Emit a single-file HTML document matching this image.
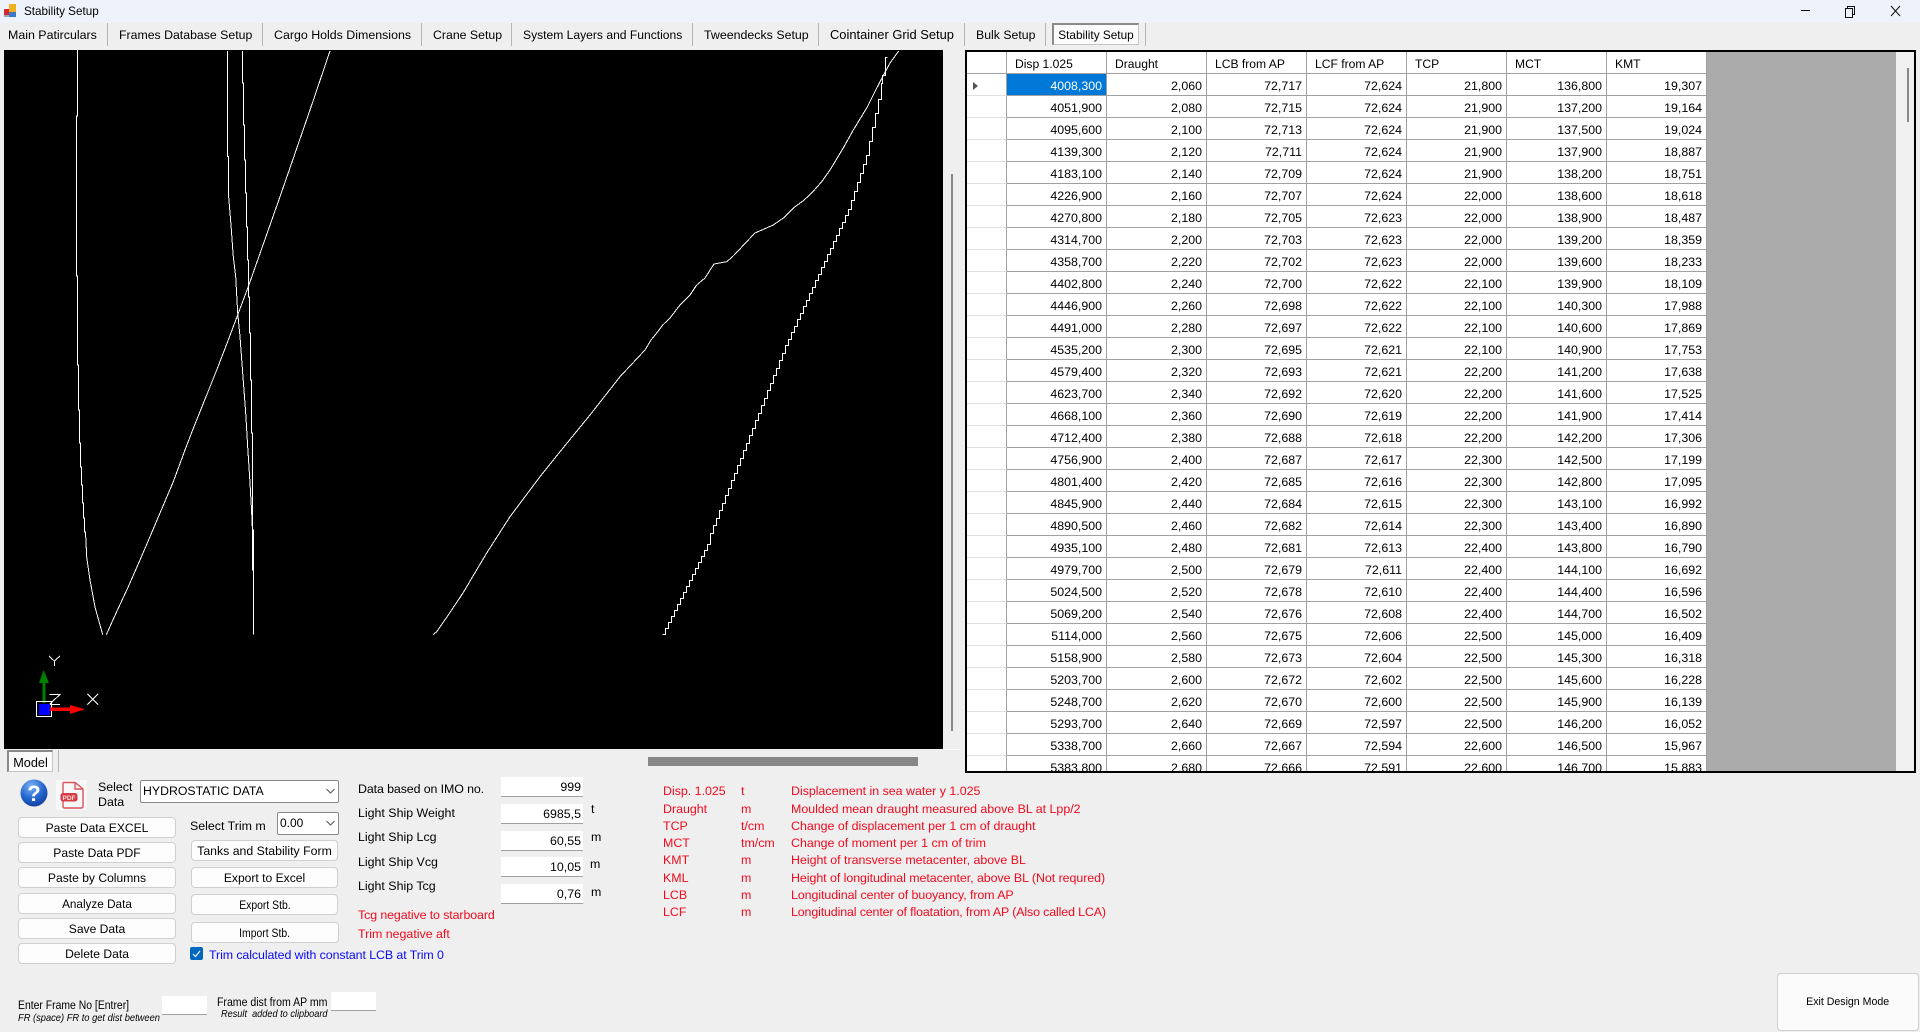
<!DOCTYPE html>
<html><head><meta charset="utf-8"><title>Stability Setup</title>
<style>
html,body{margin:0;padding:0}
body{width:1920px;height:1032px;position:relative;overflow:hidden;background:#efefef;font:12.4px/16px "Liberation Sans",sans-serif;color:#000}
.t{position:absolute;white-space:nowrap;height:16px;line-height:16px}
.x{transform-origin:0 50%}
.r{color:#f00a1e}
.sep{position:absolute;width:1px;background:#b4b4b4}
.btn{position:absolute;box-sizing:border-box;background:#fdfdfd;border:1px solid #d0d0d0;border-radius:4px;text-align:center;white-space:nowrap;height:21px;line-height:20px;font-size:12.1px}
.btn span{display:inline-block}
.inp{position:absolute;box-sizing:border-box;left:501px;width:82px;height:20px;background:#fff;border-bottom:1px solid #a0a0a0;text-align:right;padding-right:2px;line-height:21px}
.cmb{position:absolute;box-sizing:border-box;background:#fff;border:1px solid #888;border-radius:2px;height:23px;line-height:21px;padding-left:2px;white-space:nowrap}
table{border-collapse:separate;border-spacing:0;table-layout:fixed;position:absolute;left:0;top:0;width:740px;background:#fff}
td,th{box-sizing:border-box;height:22px;padding:3px 4px 0 0;border-right:1px solid #a0a0a0;border-bottom:1px solid #a0a0a0;text-align:right;vertical-align:top;font:12.4px/18px "Liberation Sans",sans-serif;overflow:hidden;white-space:nowrap}
th{text-align:left;padding:3px 0 0 8px;font-size:12.1px;font-weight:400}
td:first-child,th:first-child{border-bottom-color:#e2e2e2;padding:0}
th:first-child{border-bottom-color:#a0a0a0}
td.s{background:#0078d7;color:#fff}
</style></head><body>
<div style="position:absolute;left:0;top:0;width:1920px;height:23px;background:#eef3fb"></div>
<svg style="position:absolute;left:3px;top:4px" width="15" height="14" viewBox="0 0 15 14" shape-rendering="crispEdges"><rect x="6" y="0" width="7" height="8" fill="#f0b020"/><rect x="1" y="5" width="5" height="6" fill="#d8262c"/><rect x="6" y="8" width="7" height="5" fill="#3b78c8"/><rect x="1" y="11" width="5" height="2" fill="#9aa6b8"/></svg>
<span class="t" style="left:24px;top:4px;font-size:11.7px">Stability Setup</span>
<svg style="position:absolute;left:1795px;top:2px" width="115" height="20" fill="none" stroke="#111" stroke-width="1"><path d="M6 8.5h9" /><path d="M50.5 6.5h7v9h-7z M52.500 6.500v-2h7v8h-2"/><path d="M96 4l9 10M105 4l-9 10" /></svg>

<span class="t" style="left:8px;top:27px">Main Patirculars</span><div class="sep" style="left:107px;top:23px;height:23px"></div>
<span class="t" style="left:119px;top:27px;font-size:12.3px">Frames Database Setup</span><div class="sep" style="left:262px;top:23px;height:23px"></div>
<span class="t" style="left:274px;top:27px">Cargo Holds Dimensions</span><div class="sep" style="left:421px;top:23px;height:23px"></div>
<span class="t" style="left:433px;top:27px;font-size:12.3px">Crane Setup</span><div class="sep" style="left:511px;top:23px;height:23px"></div>
<span class="t" style="left:523px;top:27px;font-size:12.1px">System Layers and Functions</span><div class="sep" style="left:692px;top:23px;height:23px"></div>
<span class="t" style="left:704px;top:27px">Tweendecks Setup</span><div class="sep" style="left:818px;top:23px;height:23px"></div>
<span class="t" style="left:830px;top:27px;font-size:12.9px">Cointainer Grid Setup</span><div class="sep" style="left:964px;top:23px;height:23px"></div>
<span class="t" style="left:976px;top:27px;font-size:12.3px">Bulk Setup</span><div class="sep" style="left:1045px;top:23px;height:23px"></div>
<div style="position:absolute;box-sizing:border-box;left:1052px;top:23px;width:87px;height:22px;background:#fbfbfb;border:1px solid #c4c4c4;border-top:2px solid #8a8a8a;border-left:2px solid #8a8a8a;text-align:center;line-height:21px;white-space:nowrap;font-size:11.8px">Stability Setup</div>
<div class="sep" style="left:1145px;top:23px;height:23px"></div>

<svg style="position:absolute;left:4px;top:50px" width="939" height="699" viewBox="4 50 939 699">
<rect x="4" y="50" width="939" height="699" fill="#000"/>
<g fill="none" stroke="#fff" stroke-width="1" shape-rendering="crispEdges">
<path d="M77.500 50V116H76.500V276H77.500V365H78.500V410H79.500V443H80.500V467H81.500V485H82.500V503H83.500V518H84.500V532H85.500L86.700 557L90 580L95 607L102.700 634.700"/>
<path d="M106.300 634.700L116.700 611.700L128.300 586.700L140 560L150 536.700L160 513L173.300 481.700L185 450L193.300 428.300L206.700 395L216.700 370L228.300 340L248.300 286.700L280 196.700L310 110L330 51"/>
<path d="M227.500 51V156.500H228.500V195L231 225L233.300 256.700L235.700 276.700L237.700 313L240 336.700L242.700 373L245.700 413L247.700 447L250 483L251.700 513L252.500 532V570H253.500V634.700"/>
<path d="M242.500 51V83H243.500V125H244.500V160H245.500V193H246.500V227H247.500V260H248.500V297H249.500V333H250.500V380H251.500V433H252.500V530H253.500V634.700"/>
<path d="M898.700 51L890 63L880 81.700L866.700 108L853.300 130L843.300 148L830 170L821.700 181.700L811.700 193L803.300 200.700L793.300 208L783.300 218L773.300 225L755 233L746.700 241.700L733.300 256L726.700 261.700L714 264L705 278L696.700 285L690 295L680 305L670 318L662.700 325L656.700 333L651 340L645 350L620 376.700L590 415L560 451.700L540 476.700L510 516.700L486.700 553L463 593L448.300 615L436.700 631.700L433.300 634.700"/>
<path d="M662.500 634.500h3v-6h3v-6h3v-6h3v-6h3v-6h3v-6h3v-6h3v-6h3v-6h3v-6h3v-6h3v-6h3v-6h3v-6h3v-6h3v-4v-7h3v-8h3v-7h3v-8h3v-7h3v-8h3v-7h3v-8h3v-7h3v-8h3v-7h3v-8h3v-7h3v-8h3v-7h3v-8h3v-7h3v-8h3v-7h3v-8h3v-7h3v-8h3v-7h3v-8h3v-7h3v-8h3v-6h3v-7h3v-6h3v-7h3v-6h3v-7h3v-6h3v-7h3v-6h3v-7h3v-6h3v-7h3v-6h3v-7h3v-6h3v-7h3v-6h3v-7h3v-6h3v-7h3v-6h3v-9h3v-9h3v-9h3v-9h3v-9h3v-9h3v-14h3v-14h3v-14h3v-14h3v-16h1v-8h3v-18h2"/>
<path d="M49 656L54.300 661L60 656M54.300 661V666"/>
<path d="M49.300 694.500H60L49.300 704.500H60"/>
<path d="M87.300 694L98 704.700M98 694L87.300 704.700"/>
</g>
<rect x="42.500" y="682" width="3" height="21" fill="#008000"/>
<path d="M43.700 670L49 683H39Z" fill="#008000"/>
<rect x="36.500" y="701.500" width="15" height="15" fill="none" stroke="#fff" stroke-width="1"/>
<rect x="39" y="704" width="11" height="11" fill="#00f"/>
<rect x="50" y="707.500" width="20" height="3.500" fill="#f00"/>
<path d="M70 705L85 709.300L70 714Z" fill="#f00"/>
</svg>
<div style="position:absolute;left:943px;top:749px;width:17px;height:1px;background:#fff"></div>
<div style="position:absolute;left:951px;top:174px;width:2px;height:557px;background:#888"></div>
<div style="position:absolute;left:648px;top:757px;width:270px;height:9px;background:#878787"></div>

<div style="position:absolute;box-sizing:border-box;left:965px;top:50px;width:951px;height:723px;border:2px solid #000;background:#ababab;overflow:hidden">
<div style="position:absolute;right:0;top:0;width:18px;height:100%;background:#f0f0f0"></div>
<div style="position:absolute;left:940px;top:16px;width:2px;height:54px;background:#888"></div>
<table><colgroup><col style="width:40px"><col style="width:100px"><col style="width:100px"><col style="width:100px"><col style="width:100px"><col style="width:100px"><col style="width:100px"><col style="width:100px"></colgroup>
<tr><th></th><th>Disp 1.025</th><th>Draught</th><th>LCB from AP</th><th>LCF from AP</th><th>TCP</th><th>MCT</th><th>KMT</th></tr>
<tr><td></td><td class="s">4008,300</td><td>2,060</td><td>72,717</td><td>72,624</td><td>21,800</td><td>136,800</td><td>19,307</td></tr>
<tr><td></td><td>4051,900</td><td>2,080</td><td>72,715</td><td>72,624</td><td>21,900</td><td>137,200</td><td>19,164</td></tr>
<tr><td></td><td>4095,600</td><td>2,100</td><td>72,713</td><td>72,624</td><td>21,900</td><td>137,500</td><td>19,024</td></tr>
<tr><td></td><td>4139,300</td><td>2,120</td><td>72,711</td><td>72,624</td><td>21,900</td><td>137,900</td><td>18,887</td></tr>
<tr><td></td><td>4183,100</td><td>2,140</td><td>72,709</td><td>72,624</td><td>21,900</td><td>138,200</td><td>18,751</td></tr>
<tr><td></td><td>4226,900</td><td>2,160</td><td>72,707</td><td>72,624</td><td>22,000</td><td>138,600</td><td>18,618</td></tr>
<tr><td></td><td>4270,800</td><td>2,180</td><td>72,705</td><td>72,623</td><td>22,000</td><td>138,900</td><td>18,487</td></tr>
<tr><td></td><td>4314,700</td><td>2,200</td><td>72,703</td><td>72,623</td><td>22,000</td><td>139,200</td><td>18,359</td></tr>
<tr><td></td><td>4358,700</td><td>2,220</td><td>72,702</td><td>72,623</td><td>22,000</td><td>139,600</td><td>18,233</td></tr>
<tr><td></td><td>4402,800</td><td>2,240</td><td>72,700</td><td>72,622</td><td>22,100</td><td>139,900</td><td>18,109</td></tr>
<tr><td></td><td>4446,900</td><td>2,260</td><td>72,698</td><td>72,622</td><td>22,100</td><td>140,300</td><td>17,988</td></tr>
<tr><td></td><td>4491,000</td><td>2,280</td><td>72,697</td><td>72,622</td><td>22,100</td><td>140,600</td><td>17,869</td></tr>
<tr><td></td><td>4535,200</td><td>2,300</td><td>72,695</td><td>72,621</td><td>22,100</td><td>140,900</td><td>17,753</td></tr>
<tr><td></td><td>4579,400</td><td>2,320</td><td>72,693</td><td>72,621</td><td>22,200</td><td>141,200</td><td>17,638</td></tr>
<tr><td></td><td>4623,700</td><td>2,340</td><td>72,692</td><td>72,620</td><td>22,200</td><td>141,600</td><td>17,525</td></tr>
<tr><td></td><td>4668,100</td><td>2,360</td><td>72,690</td><td>72,619</td><td>22,200</td><td>141,900</td><td>17,414</td></tr>
<tr><td></td><td>4712,400</td><td>2,380</td><td>72,688</td><td>72,618</td><td>22,200</td><td>142,200</td><td>17,306</td></tr>
<tr><td></td><td>4756,900</td><td>2,400</td><td>72,687</td><td>72,617</td><td>22,300</td><td>142,500</td><td>17,199</td></tr>
<tr><td></td><td>4801,400</td><td>2,420</td><td>72,685</td><td>72,616</td><td>22,300</td><td>142,800</td><td>17,095</td></tr>
<tr><td></td><td>4845,900</td><td>2,440</td><td>72,684</td><td>72,615</td><td>22,300</td><td>143,100</td><td>16,992</td></tr>
<tr><td></td><td>4890,500</td><td>2,460</td><td>72,682</td><td>72,614</td><td>22,300</td><td>143,400</td><td>16,890</td></tr>
<tr><td></td><td>4935,100</td><td>2,480</td><td>72,681</td><td>72,613</td><td>22,400</td><td>143,800</td><td>16,790</td></tr>
<tr><td></td><td>4979,700</td><td>2,500</td><td>72,679</td><td>72,611</td><td>22,400</td><td>144,100</td><td>16,692</td></tr>
<tr><td></td><td>5024,500</td><td>2,520</td><td>72,678</td><td>72,610</td><td>22,400</td><td>144,400</td><td>16,596</td></tr>
<tr><td></td><td>5069,200</td><td>2,540</td><td>72,676</td><td>72,608</td><td>22,400</td><td>144,700</td><td>16,502</td></tr>
<tr><td></td><td>5114,000</td><td>2,560</td><td>72,675</td><td>72,606</td><td>22,500</td><td>145,000</td><td>16,409</td></tr>
<tr><td></td><td>5158,900</td><td>2,580</td><td>72,673</td><td>72,604</td><td>22,500</td><td>145,300</td><td>16,318</td></tr>
<tr><td></td><td>5203,700</td><td>2,600</td><td>72,672</td><td>72,602</td><td>22,500</td><td>145,600</td><td>16,228</td></tr>
<tr><td></td><td>5248,700</td><td>2,620</td><td>72,670</td><td>72,600</td><td>22,500</td><td>145,900</td><td>16,139</td></tr>
<tr><td></td><td>5293,700</td><td>2,640</td><td>72,669</td><td>72,597</td><td>22,500</td><td>146,200</td><td>16,052</td></tr>
<tr><td></td><td>5338,700</td><td>2,660</td><td>72,667</td><td>72,594</td><td>22,600</td><td>146,500</td><td>15,967</td></tr>
<tr><td></td><td>5383,800</td><td>2,680</td><td>72,666</td><td>72,591</td><td>22,600</td><td>146,700</td><td>15,883</td></tr>
</table>
<div style="position:absolute;left:6px;top:30px;width:0;height:0;border-left:5px solid #555;border-top:4px solid transparent;border-bottom:4px solid transparent"></div>
</div>

<div style="position:absolute;box-sizing:border-box;left:7px;top:750px;width:46px;height:22px;background:#fbfbfb;border:1px solid #c4c4c4;border-top:2px solid #8a8a8a;border-left:2px solid #8a8a8a;text-align:center;line-height:22px;font-size:12.7px">Model</div>
<div class="sep" style="left:58px;top:750px;height:22px"></div>

<svg style="position:absolute;left:20px;top:779px" width="28" height="28" viewBox="0 0 28 28">
<defs><radialGradient id="g" cx="40%" cy="25%" r="80%"><stop offset="0" stop-color="#7db4f2"/><stop offset=".55" stop-color="#2668d0"/><stop offset="1" stop-color="#123c9c"/></radialGradient></defs>
<circle cx="14" cy="14" r="13.500" fill="url(#g)"/>
<text x="14" y="22" text-anchor="middle" font-family="Liberation Sans,sans-serif" font-weight="700" font-size="22" fill="#fff">?</text></svg>
<svg style="position:absolute;left:56px;top:780px" width="31" height="30" viewBox="0 0 31 30">
<rect width="31" height="30" fill="#f8f8f8"/>
<path d="M7 2.500H19L27 9V26.500Q27 28 25.500 28H8.500Q7 28 7 26.500V21M7 13V2.500M19 2.500V9H27" fill="none" stroke="#d9545a" stroke-width="1.400"/>
<rect x="4.500" y="13" width="17" height="8.500" rx="2.500" fill="#d33c44"/>
<text x="13" y="20" text-anchor="middle" font-family="Liberation Sans,sans-serif" font-weight="700" font-size="6.500" fill="#fbdcdc">PDF</text></svg>

<span class="t" style="left:98px;top:779px">Select</span>
<span class="t" style="left:98px;top:794px">Data</span>
<div class="cmb" style="left:140px;top:780px;width:199px;font-size:12.3px">HYDROSTATIC DATA</div>
<svg style="position:absolute;left:326px;top:788px" width="9" height="7" fill="none" stroke="#555"><path d="M.5 1L4.500 5L8.500 1"/></svg>

<div class="btn" style="left:18px;top:817px;width:158px">Paste Data EXCEL</div>
<div class="btn" style="left:18px;top:842px;width:158px">Paste Data PDF</div>
<div class="btn" style="left:18px;top:867px;width:158px">Paste by Columns</div>
<div class="btn" style="left:18px;top:893px;width:158px"><span style="transform:scaleX(.97)">Analyze Data</span></div>
<div class="btn" style="left:18px;top:918px;width:158px">Save Data</div>
<div class="btn" style="left:18px;top:943px;width:158px">Delete Data</div>

<span class="t" style="left:190px;top:818px">Select Trim m</span>
<div class="cmb" style="left:277px;top:812px;width:62px;font-size:12px">0.00</div>
<svg style="position:absolute;left:326px;top:820px" width="9" height="7" fill="none" stroke="#555"><path d="M.5 1L4.500 5L8.500 1"/></svg>
<div class="btn" style="left:191px;top:840px;width:147px;font-size:12.3px">Tanks and Stability Form</div>
<div class="btn" style="left:191px;top:867px;width:147px">Export to Excel</div>
<div class="btn" style="left:191px;top:894px;width:147px"><span style="transform:scaleX(.86)">Export Stb.</span></div>
<div class="btn" style="left:191px;top:922px;width:148px"><span style="transform:scaleX(.86)">Import Stb.</span></div>

<span class="t" style="left:358px;top:781px;letter-spacing:-.1px">Data based on IMO no.</span>
<span class="t" style="left:358px;top:805px">Light Ship Weight</span>
<span class="t" style="left:358px;top:829px">Light Ship Lcg</span>
<span class="t" style="left:358px;top:854px">Light Ship Vcg</span>
<span class="t" style="left:358px;top:878px">Light Ship Tcg</span>
<div class="inp" style="top:777px;line-height:21px">999</div>
<div class="inp" style="top:804px">6985,5</div>
<div class="inp" style="top:831px">60,55</div>
<div class="inp" style="top:857px">10,05</div>
<div class="inp" style="top:884px">0,76</div>
<span class="t" style="left:591px;top:801px">t</span>
<span class="t" style="left:591px;top:829px">m</span>
<span class="t" style="left:590px;top:856px">m</span>
<span class="t" style="left:591px;top:884px">m</span>
<span class="t r" style="left:358px;top:907px;letter-spacing:-.1px">Tcg negative to starboard</span>
<span class="t r" style="left:358px;top:926px">Trim negative aft</span>
<div style="position:absolute;left:190px;top:947px;width:13px;height:13px;background:#0067c0;border-radius:2px"></div>
<svg style="position:absolute;left:190px;top:947px" width="13" height="13" fill="none" stroke="#fff" stroke-width="1.100"><path d="M3 7L5.500 9.500L10 4"/></svg>
<span class="t" style="left:209px;top:947px;color:#0a0af0;letter-spacing:-.085px">Trim calculated with constant LCB at Trim 0</span>

<span class="t x" style="left:18px;top:997px;transform:scaleX(.84)">Enter Frame No [Entrer]</span>
<span class="t x" style="left:18px;top:1011px;font-size:10.200px;font-style:italic;transform:scaleX(.915)">FR (space) FR to get dist between</span>
<div style="position:absolute;box-sizing:border-box;left:162px;top:996px;width:45px;height:19px;background:#fff;border-bottom:1px solid #a0a0a0"></div>
<span class="t x" style="left:217px;top:994px;transform:scaleX(.85)">Frame dist from AP mm</span>
<span class="t x" style="left:221px;top:1007px;font-size:10.200px;font-style:italic;transform:scaleX(.9)">Result&nbsp; added to clipboard</span>
<div style="position:absolute;box-sizing:border-box;left:331px;top:992px;width:45px;height:19px;background:#fff;border-bottom:1px solid #a0a0a0"></div>

<span class="t r" style="left:663px;top:783px">Disp. 1.025</span><span class="t r" style="left:741px;top:783px">t</span><span class="t r" style="left:791px;top:783px">Displacement in sea water y 1.025</span>
<span class="t r" style="left:663px;top:801px">Draught</span><span class="t r" style="left:741px;top:801px">m</span><span class="t r" style="left:791px;top:801px">Moulded mean draught measured above BL at Lpp/2</span>
<span class="t r" style="left:663px;top:818px">TCP</span><span class="t r" style="left:741px;top:818px">t/cm</span><span class="t r" style="left:791px;top:818px">Change of displacement per 1 cm of draught</span>
<span class="t r" style="left:663px;top:835px">MCT</span><span class="t r" style="left:741px;top:835px">tm/cm</span><span class="t r" style="left:791px;top:835px">Change of moment per 1 cm of trim</span>
<span class="t r" style="left:663px;top:852px">KMT</span><span class="t r" style="left:741px;top:852px">m</span><span class="t r" style="left:791px;top:852px">Height of transverse metacenter, above BL</span>
<span class="t r" style="left:663px;top:870px">KML</span><span class="t r" style="left:741px;top:870px">m</span><span class="t r" style="left:791px;top:870px;letter-spacing:-.04px">Height of longitudinal metacenter, above BL (Not requred)</span>
<span class="t r" style="left:663px;top:887px">LCB</span><span class="t r" style="left:741px;top:887px">m</span><span class="t r" style="left:791px;top:887px;letter-spacing:-.06px">Longitudinal center of buoyancy, from AP</span>
<span class="t r" style="left:663px;top:904px">LCF</span><span class="t r" style="left:741px;top:904px">m</span><span class="t r" style="left:791px;top:904px;letter-spacing:-.12px">Longitudinal center of floatation, from AP (Also called LCA)</span>

<div class="btn" style="left:1777px;top:973px;width:142px;height:58px;line-height:57px;background:#fbfbfb;font-size:11.400px"><span style="transform:scaleX(.93)">Exit Design Mode</span></div>
</body></html>
